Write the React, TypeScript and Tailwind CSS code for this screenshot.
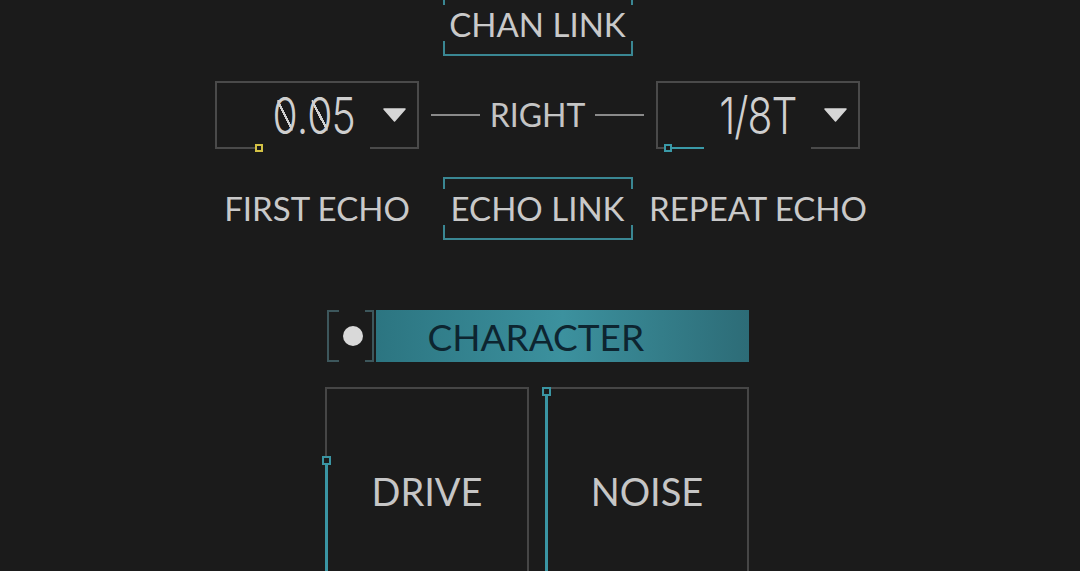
import React from 'react';

type Props = { children?: React.ReactNode };

const Bracket = ({ children }: Props) => (
  <div className="relative flex h-[63px] w-[190px] shrink-0 items-center justify-center border-y-2 border-[#3a8793]">
    <span className="absolute top-0 left-0 h-[10px] w-[2px] bg-[#3a8793]" />
    <span className="absolute top-0 right-0 h-[10px] w-[2px] bg-[#3a8793]" />
    <span className="absolute bottom-0 left-0 h-[13px] w-[2px] bg-[#3a8793]" />
    <span className="absolute bottom-0 right-0 h-[13px] w-[2px] bg-[#3a8793]" />
    <span className="text-[33px] leading-none whitespace-nowrap text-[#c9c9c9]">{children}</span>
  </div>
);

const Caret = () => (
  <svg width="23" height="14" viewBox="0 0 23 14" className="shrink-0">
    <path d="M1 1H22L11.5 13Z" fill="#d6d6d6" stroke="#d6d6d6" strokeWidth="1.5" strokeLinejoin="round" />
  </svg>
);

// the display font of the plugin uses a slashed zero
const Zero = () => (
  <span className="inline-block bg-[linear-gradient(to_top_right,transparent_calc(50%-1.4px),#cfcfcf_calc(50%-1.4px),#cfcfcf_calc(50%+1.4px),transparent_calc(50%+1.4px))] bg-[length:64%_60%] bg-center bg-no-repeat">
    0
  </span>
);

const Digits = ({ value }: { value: string }) => (
  <span className="inline-block origin-right scale-x-[0.8] font-[Inter,sans-serif] text-[51px] leading-none font-light tracking-tight text-[#cfcfcf]">
    {value.split('').map((ch, i) => (ch === '0' ? <Zero key={i} /> : <span key={i}>{ch}</span>))}
  </span>
);

const Dropdown = ({ value, bottom }: { value: string; bottom: React.ReactNode }) => (
  <div className="flex h-[68px] w-[204px] shrink-0 flex-col border-x-2 border-t-2 border-[#4a4a4a]">
    <div className="flex flex-1 items-center justify-end gap-[28px] pr-[11px]">
      <Digits value={value} />
      <Caret />
    </div>
    <div className="flex h-[2px] items-center">{bottom}</div>
  </div>
);

const Label = ({ children }: Props) => (
  <div className="flex w-[204px] shrink-0 justify-center">
    <span className="text-[33px] leading-none whitespace-nowrap text-[#c9c9c9]">{children}</span>
  </div>
);

const Knob = ({ label, top }: { label: string; top: string }) => (
  <div className="relative flex h-[208px] w-[204px] shrink-0 items-center justify-center border-2 border-[#464646]">
    <div className={`absolute -left-[2px] bottom-0 w-[3px] bg-[#3a95a3] ${top}`} />
    <div className={`absolute -left-[5px] size-[9px] border-2 border-[#3a95a3] bg-[#1b1b1b] ${top} -translate-y-[4px]`} />
    <span className="text-[38px] leading-none text-[#c6c6c6]">{label}</span>
  </div>
);

const App = () => {
  return (
    <div className="h-[571px] w-full overflow-hidden bg-[#1b1b1b] font-[Lato,sans-serif]">
      <div className="ml-[215px] flex w-[645px] flex-col">
        <div className="-mt-[7px] self-center">
          <Bracket>CHAN LINK</Bracket>
        </div>

        <div className="mt-[25px] flex items-center justify-between">
          <Dropdown
            value="0.05"
            bottom={
              <>
                <div className="h-[2px] w-[38px] bg-[#4a4a4a]" />
                <div className="size-[8px] shrink-0 border-2 border-[#d4c245] bg-[#1b1b1b]" />
                <div className="flex-1" />
                <div className="h-[2px] w-[47px] bg-[#4a4a4a]" />
              </>
            }
          />
          <div className="flex items-center gap-[10px]">
            <div className="h-[2px] w-[49px] bg-[#8a8a8a]" />
            <span className="text-[32px] leading-none text-[#c4c4c4]">RIGHT</span>
            <div className="h-[2px] w-[49px] bg-[#8a8a8a]" />
          </div>
          <Dropdown
            value="1/8T"
            bottom={
              <>
                <div className="h-[2px] w-[6px] bg-[#4a4a4a]" />
                <div className="size-[8px] shrink-0 border-2 border-[#3a9aa8] bg-[#1b1b1b]" />
                <div className="h-[2px] w-[32px] bg-[#3a9aa8]" />
                <div className="flex-1" />
                <div className="h-[2px] w-[47px] bg-[#4a4a4a]" />
              </>
            }
          />
        </div>

        <div className="mt-[28px] flex items-center justify-between">
          <Label>FIRST ECHO</Label>
          <Bracket>ECHO LINK</Bracket>
          <Label>REPEAT ECHO</Label>
        </div>

        <div className="mt-[70px] flex h-[52px] w-[422px] self-center">
          <div className="relative flex w-[47px] shrink-0 items-center justify-center pl-[5px]">
            <span className="absolute top-0 bottom-0 left-0 w-[12px] border-y-2 border-l-2 border-[#3d575c]" />
            <span className="absolute top-0 right-0 bottom-0 w-[9px] border-y-2 border-r-2 border-[#3d575c]" />
            <span className="size-[20px] rounded-full bg-[#d9d9d9]" />
          </div>
          <div className="ml-[2px] flex flex-1 items-center bg-linear-to-r from-[#2c7581] via-[#3c919e] to-[#2d6c77] pl-[52px]">
            <span className="text-[37px] leading-none text-[#0d2530]">CHARACTER</span>
          </div>
        </div>

        <div className="mt-[25px] ml-[110px] flex gap-[16px]">
          <Knob label="DRIVE" top="top-[71px]" />
          <Knob label="NOISE" top="top-[2px]" />
        </div>
      </div>
    </div>
  );
};

export default App;
